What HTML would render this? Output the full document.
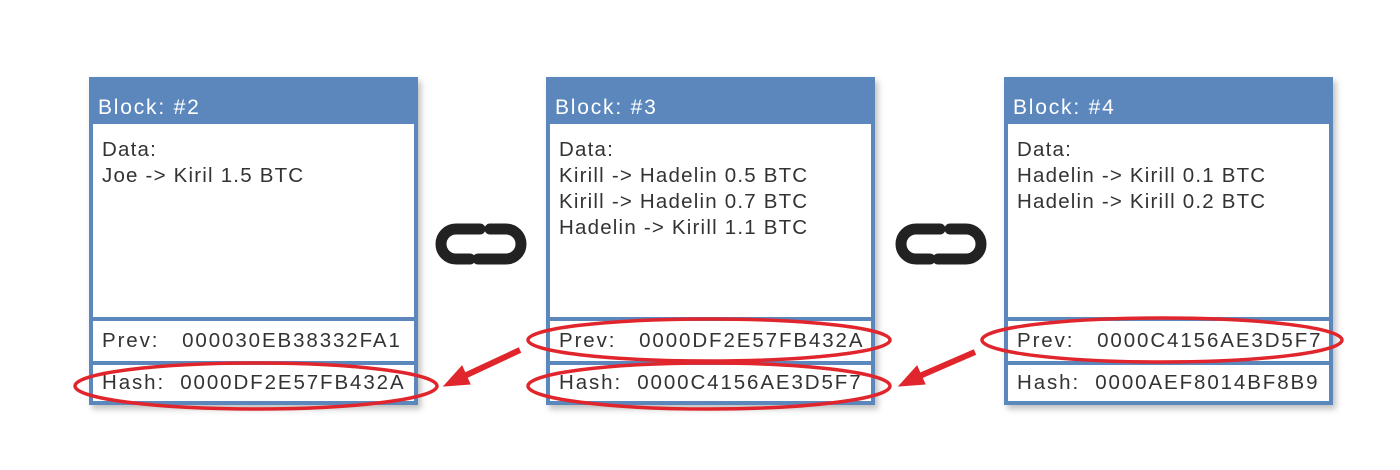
<!DOCTYPE html>
<html><head><style>
body{margin:0;width:1400px;height:470px;background:#fff;position:relative;overflow:hidden;font-family:"Liberation Sans",sans-serif;}
.b{position:absolute;top:77px;width:329px;height:328px;background:#5b87bd;box-shadow:3px 4px 6px rgba(0,0,0,.25);}
.h{position:absolute;left:9px;top:19px;color:#fff;font-size:21px;letter-spacing:1.8px;}
.d{position:absolute;left:4px;right:4px;top:47px;height:193px;background:#fff;}
.d div{position:absolute;left:9px;top:13px;font-size:20.5px;line-height:26px;color:#333;letter-spacing:1.2px;white-space:nowrap;}
.p{position:absolute;left:4px;right:4px;top:244px;height:40px;background:#fff;font-size:20.5px;color:#333;letter-spacing:1.9px;}
.q{position:absolute;left:4px;right:4px;top:288px;height:36px;background:#fff;font-size:20.5px;color:#333;letter-spacing:1.9px;}
.p span,.q span{position:absolute;left:9px;top:50%;transform:translateY(-50%);white-space:pre;}
svg{position:absolute;left:0;top:0}
</style></head><body>
<div class="b" style="left:89px"><div class="h">Block: #2</div><div class="d"><div>Data:<br>Joe -&gt; Kiril 1.5 BTC</div></div><div class="p"><span>Prev:   000030EB38332FA1</span></div><div class="q"><span>Hash:  0000DF2E57FB432A</span></div></div>
<div class="b" style="left:546px"><div class="h">Block: #3</div><div class="d"><div>Data:<br>Kirill -&gt; Hadelin 0.5 BTC<br>Kirill -&gt; Hadelin 0.7 BTC<br>Hadelin -&gt; Kirill 1.1 BTC</div></div><div class="p"><span>Prev:   0000DF2E57FB432A</span></div><div class="q"><span>Hash:  0000C4156AE3D5F7</span></div></div>
<div class="b" style="left:1004px"><div class="h">Block: #4</div><div class="d"><div>Data:<br>Hadelin -&gt; Kirill 0.1 BTC<br>Hadelin -&gt; Kirill 0.2 BTC</div></div><div class="p"><span>Prev:   0000C4156AE3D5F7</span></div><div class="q"><span>Hash:  0000AEF8014BF8B9</span></div></div>
<svg width="1400" height="470">
<g fill="none" stroke="#222" stroke-width="11" stroke-linecap="round">
<path d="M480 229 H456 A15 15 0 0 0 456 259 H470"/><path d="M478 259 H506 A15 15 0 0 0 506 229 H490"/>
<path d="M940 229 H916 A15 15 0 0 0 916 259 H930"/><path d="M938 259 H966 A15 15 0 0 0 966 229 H950"/>
</g>
<g fill="none" stroke="#e0262c" stroke-width="3.5">
<ellipse cx="256" cy="386" rx="181" ry="23"/>
<ellipse cx="709" cy="340" rx="181" ry="21"/>
<ellipse cx="709" cy="386" rx="181" ry="23"/>
<ellipse cx="1162" cy="340" rx="180" ry="22"/>
</g>
<g stroke="#e0262c" stroke-width="6" fill="#e0262c">
<line x1="520" y1="350" x2="460" y2="378"/><polygon points="444,386 462,366 470,384" stroke-width="1"/>
<line x1="975" y1="352" x2="915" y2="378"/><polygon points="899,386 917,366 925,384" stroke-width="1"/>
</g>
</svg>
</body></html>
